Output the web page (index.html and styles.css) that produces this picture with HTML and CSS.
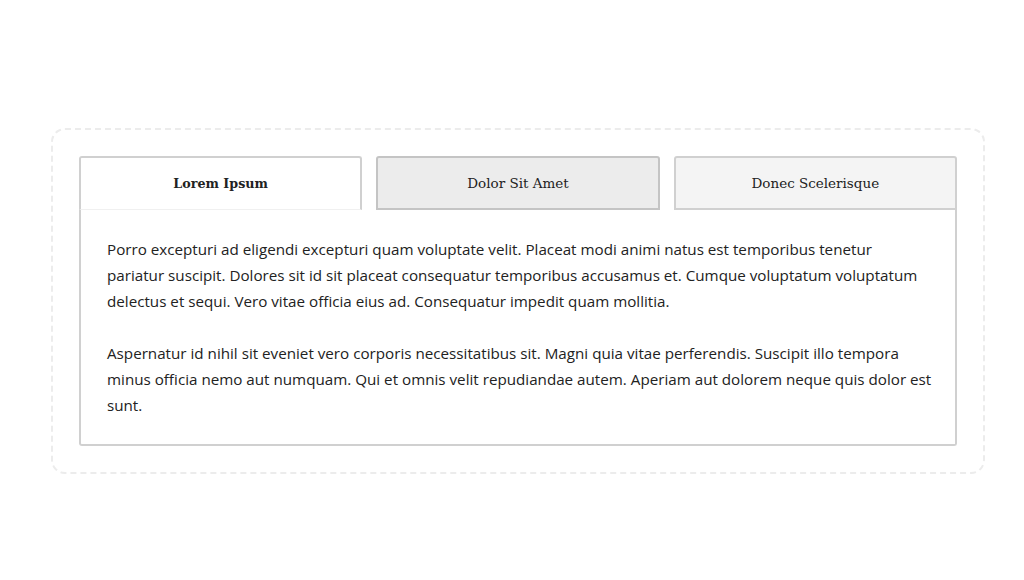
FILE: index.html
```html
<!DOCTYPE html>
<html lang="en">
<head>
  <meta charset="UTF-8">
  <meta name="viewport" content="width=device-width, initial-scale=1.0">
  <title>Tabs</title>
  <link rel="stylesheet" href="styles.css">
</head>
<body>
  <div class="wrapper">
    <div class="tabs">
      <ul class="tab-list">
        <li class="tab active">Lorem Ipsum</li>
        <li class="tab hover">Dolor Sit Amet</li>
        <li class="tab">Donec Scelerisque</li>
      </ul>
      <div class="tab-panel">
        <p>Porro excepturi ad eligendi excepturi quam voluptate velit. Placeat modi animi natus est temporibus tenetur pariatur suscipit. Dolores sit id sit placeat consequatur temporibus accusamus et. Cumque voluptatum voluptatum delectus et sequi. Vero vitae officia eius ad. Consequatur impedit quam mollitia.</p>
        <p>Aspernatur id nihil sit eveniet vero corporis necessitatibus sit. Magni quia vitae perferendis. Suscipit illo tempora minus officia nemo aut numquam. Qui et omnis velit repudiandae autem. Aperiam aut dolorem neque quis dolor est sunt.</p>
      </div>
    </div>
  </div>
</body>
</html>
```

FILE: styles.css
```css
body {
  margin: 0;
  padding: 128px 0 0 51px;
  background: #fff;
  font-family: "Open Sans", sans-serif;
  color: #222;
}
.wrapper {
  width: 878px;
  padding: 26px;
  border: 2px dashed #ececec;
  border-radius: 14px;
}
.tabs {
  display: flex;
  flex-direction: column;
}
.tab-list {
  display: flex;
  gap: 14px;
  margin: 0;
  padding: 0;
  list-style: none;
}
.tab {
  flex: 1;
  height: 54px;
  box-sizing: border-box;
  display: flex;
  align-items: center;
  justify-content: center;
  font-family: "DejaVu Serif", serif;
  font-size: 13.5px;
  color: #222;
  background: #f4f4f4;
  border: 2px solid #d0d0d0;
  border-radius: 3px 3px 0 0;
  position: relative;
  z-index: 1;
  margin-bottom: -2px;
}
.tab.hover {
  background: #ececec;
  border-color: #c4c4c4;
}
.tab.active {
  background: #fff;
  font-weight: bold;
  font-size: 12.7px;
  border-bottom: 1px solid #f0f0f0;
  margin-bottom: 0;
}
.tab-panel {
  border: 2px solid #d0d0d0;
  border-top: none;
  border-radius: 0 0 3px 3px;
  padding: 26px 22px 26px 26px;
}
.tab-panel p {
  margin: 0 0 26px;
  font-size: 15.2px;
  line-height: 26px;
}
.tab-panel p:last-child {
  margin-bottom: 0;
}
```
